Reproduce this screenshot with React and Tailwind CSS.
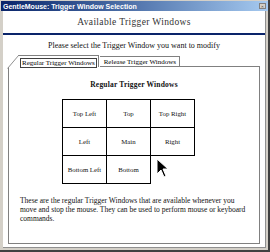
import React from 'react'

const cells = [
  ['Top Left', 'Top', 'Top Right'],
  ['Left', 'Main', 'Right'],
  ['Bottom Left', 'Bottom', null],
]

function Cursor() {
  return (
    <svg width="14" height="20" viewBox="0 0 14 20" className="absolute left-[6px] top-[3px]">
      <path d="M1 1 L1 16 L5 12 L8 19 L10 18 L7 11 L12 11 Z" fill="#000" stroke="#fff" strokeWidth="1" />
    </svg>
  )
}

export default function App() {
  return (
    <div className="w-[270px] h-[252px] bg-[#d4d0c8] border-r-2 border-b-2 border-r-[#404040] border-b-[#404040] flex flex-col overflow-hidden" style={{ fontFamily: '"Liberation Serif", serif' }}>
      <div className="h-[10px] ml-[1px] mt-[1px] flex items-center justify-between bg-gradient-to-r from-[#0a246a] to-[#a6caf0] pl-[2px] pr-[2px]">
        <span className="text-white font-bold text-[7px] leading-none" style={{ fontFamily: '"Liberation Sans", sans-serif' }}>GentleMouse: Trigger Window Selection</span>
        <span className="w-[7px] h-[6px] bg-[#d4d0c8] border border-[#808080] text-[5px] leading-none flex items-center justify-center">×</span>
      </div>
      <div className="flex-1 ml-[3px] mb-[2px] mr-[2px] bg-white border-r border-b border-[#909090] flex flex-col">
        <div className="h-[22px] flex items-center justify-center text-[9.5px] text-[#333] tracking-[0.35px]">Available Trigger Windows</div>
        <div className="h-[2px] bg-[#0a246a]" />
        <div className="h-[20px] flex items-center justify-center text-[8px] text-[#111] pt-[1px]">Please select the Trigger Window you want to modify</div>
        <div className="flex pl-[15px] h-[12px] items-end">
          <div className="relative h-[12px] pl-[2px] pr-[1px] pt-[2px] border-t border-r border-[#808080] bg-white">
            <svg width="12" height="14" className="absolute left-[-11px] top-[-1px]" viewBox="0 0 12 14">
              <line x1="11.5" y1="0.5" x2="0.5" y2="13.5" stroke="#909090" strokeWidth="1" />
            </svg>
            <div className="border border-[#404040] text-[7px] leading-[8px] px-[1px]">Regular Trigger Windows</div>
          </div>
          <div className="h-[11px] pl-[4px] pr-[3px] border-t border-r border-[#808080] text-[7px] leading-[10px] ml-[1px] border-b">Release Trigger Windows</div>
          <div className="flex-1 border-b border-[#808080] mr-[5px]" />
        </div>
        <div className="flex-1 ml-[5px] mr-[5px] mb-[3px] border-l border-r border-b border-[#808080] flex flex-col items-center">
          <div className="mt-[12px] text-[7.5px] font-bold text-[#111] tracking-[0.2px]">Regular Trigger Windows</div>
          <div className="mt-[9px] grid grid-cols-[44px_44px_44px] grid-rows-[28px_28px_28px] ml-[-12px]">
            {cells.flat().map((c, i) =>
              c ? (
                <div key={i} className="border border-black flex items-center justify-center text-[6.8px] text-[#111] -mr-px -mb-px">
                  {c}
                </div>
              ) : (
                <div key={i} className="relative">
                  <Cursor />
                </div>
              )
            )}
          </div>
          <p className="mt-[13px] self-start pl-[11px] pr-[12px] text-[7.5px] leading-[9px] text-[#111]">
            These are the regular Trigger Windows that are available whenever you move and stop the mouse. They can be used to perform mouse or keyboard commands.
          </p>
        </div>
      </div>
    </div>
  )
}
